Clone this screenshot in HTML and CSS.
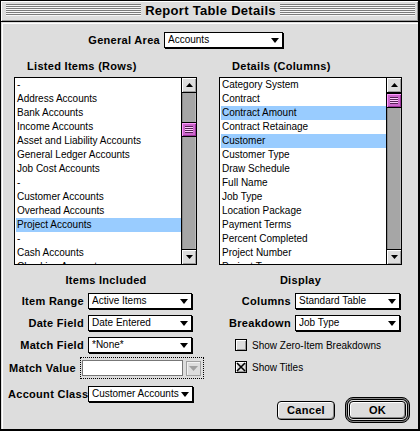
FILE: index.html
```html
<!DOCTYPE html>
<html>
<head>
<meta charset="utf-8">
<title>Report Table Details</title>
<link rel="stylesheet" href="styles.css">
</head>
<body>
<div class="window">
  <div class="titlebar">
    <div class="stripes"></div>
    <div class="title">Report Table Details</div>
    <div class="stripes"></div>
  </div>
  <div class="content">
    <div class="general-row">
      <span class="label general-label">General Area</span>
      <div class="popup popup-general"><span class="popup-text">Accounts</span><span class="caret"></span></div>
    </div>

    <div class="lists">
      <section class="list-col">
        <h2 class="col-head">Listed Items (Rows)</h2>
        <div class="listbox">
          <ul class="items">
            <li>-</li>
            <li>Address Accounts</li>
            <li>Bank Accounts</li>
            <li>Income Accounts</li>
            <li>Asset and Liability Accounts</li>
            <li>General Ledger Accounts</li>
            <li>Job Cost Accounts</li>
            <li>-</li>
            <li>Customer Accounts</li>
            <li>Overhead Accounts</li>
            <li class="sel">Project Accounts</li>
            <li>-</li>
            <li>Cash Accounts</li>
            <li>Checking Accounts</li>
          </ul>
          <div class="scrollbar">
            <div class="arrow arrow-up"><svg width="7" height="4" viewBox="0 0 7 4"><polygon points="0,4 7,4 3.5,0" fill="#000"/></svg></div>
            <div class="track"><div class="thumb thumb-left"><span class="grip"></span></div></div>
            <div class="arrow arrow-down"><svg width="7" height="4" viewBox="0 0 7 4"><polygon points="0,0 7,0 3.5,4" fill="#000"/></svg></div>
          </div>
        </div>
      </section>

      <section class="list-col">
        <h2 class="col-head">Details (Columns)</h2>
        <div class="listbox">
          <ul class="items">
            <li>Category System</li>
            <li>Contract</li>
            <li class="sel">Contract Amount</li>
            <li>Contract Retainage</li>
            <li class="sel">Customer</li>
            <li>Customer Type</li>
            <li>Draw Schedule</li>
            <li>Full Name</li>
            <li>Job Type</li>
            <li>Location Package</li>
            <li>Payment Terms</li>
            <li>Percent Completed</li>
            <li>Project Number</li>
            <li>Project Type</li>
          </ul>
          <div class="scrollbar">
            <div class="arrow arrow-up"><svg width="7" height="4" viewBox="0 0 7 4"><polygon points="0,4 7,4 3.5,0" fill="#000"/></svg></div>
            <div class="track"><div class="thumb"><span class="grip"></span></div></div>
            <div class="arrow arrow-down"><svg width="7" height="4" viewBox="0 0 7 4"><polygon points="0,0 7,0 3.5,4" fill="#000"/></svg></div>
          </div>
        </div>
      </section>
    </div>

    <div class="options">
      <section class="opt-left">
        <h2 class="opt-head">Items Included</h2>
        <div class="row first">
          <span class="label row-label">Item Range</span>
          <div class="popup popup-left"><span class="popup-text">Active Items</span><span class="caret"></span></div>
        </div>
        <div class="row">
          <span class="label row-label">Date Field</span>
          <div class="popup popup-left"><span class="popup-text">Date Entered</span><span class="caret"></span></div>
        </div>
        <div class="row">
          <span class="label row-label">Match Field</span>
          <div class="popup popup-left"><span class="popup-text">*None*</span><span class="caret"></span></div>
        </div>
        <div class="row row-match">
          <span class="label row-label">Match Value</span>
          <div class="dotted-frame">
            <div class="field"></div>
            <div class="disabled-btn"><svg width="9" height="5" viewBox="0 0 9 5"><polygon points="0,0 9,0 4.5,5" fill="#a0a0a0"/></svg></div>
          </div>
        </div>
        <div class="row row-class">
          <span class="label row-label">Account Class</span>
          <div class="popup popup-class"><span class="popup-text">Customer Accounts</span><span class="caret"></span></div>
        </div>
      </section>

      <section class="opt-right">
        <h2 class="opt-head display-head">Display</h2>
        <div class="row first">
          <span class="label row-label">Columns</span>
          <div class="popup popup-right"><span class="popup-text">Standard Table</span><span class="caret"></span></div>
        </div>
        <div class="row">
          <span class="label row-label">Breakdown</span>
          <div class="popup popup-right"><span class="popup-text">Job Type</span><span class="caret"></span></div>
        </div>
        <div class="check-row check-first">
          <span class="checkbox"></span>
          <span class="check-text">Show Zero-Item Breakdowns</span>
        </div>
        <div class="check-row check-second">
          <span class="checkbox"><svg width="10" height="10" viewBox="0 0 10 10"><path d="M1 1L9 9M9 1L1 9" stroke="#000" stroke-width="1.6"/></svg></span>
          <span class="check-text">Show Titles</span>
        </div>
        <div class="buttons">
          <div class="btn btn-cancel">Cancel</div>
          <div class="ok-ring"><div class="btn btn-ok">OK</div></div>
        </div>
      </section>
    </div>
  </div>
</div>
</body>
</html>
```

FILE: styles.css
```css
* { box-sizing: border-box; }

html, body {
  margin: 0;
  padding: 0;
}

body {
  width: 420px;
  height: 431px;
  background: #ffffff;
  color: #000;
  font-family: "Liberation Sans", Arial, sans-serif;
}

.window {
  width: 420px;
  height: 431px;
  background: #dddddd;
  border: 1px solid #000;
  border-right-width: 2px;
  border-bottom-width: 2px;
  display: flex;
  flex-direction: column;
}

/* ---------- title bar ---------- */
.titlebar {
  height: 21px;
  flex: none;
  border-bottom: 1px solid #000;
  display: flex;
  align-items: flex-start;
  padding: 0 3px 0 5px;
  background: #dddddd;
  box-shadow: inset 1px 1px #ffffff, inset -1px -1px #9a9a9a;
}

.stripes {
  flex: 1;
  height: 12px;
  margin-top: 3px;
  background: repeating-linear-gradient(to bottom, #7b7b7b 0 1px, #f7f7f7 1px 2px);
}

.title {
  padding: 0 4px;
  font-weight: bold;
  font-size: 13px;
  letter-spacing: 0.3px;
  line-height: 19px;
  white-space: nowrap;
}

/* ---------- content ---------- */
.content {
  flex: 1;
  padding: 0 16px 0 7px;
  display: flex;
  flex-direction: column;
  box-shadow: inset 1px 1px #dddddd, inset 2px 2px #ffffff;
}

.label {
  font-weight: bold;
  font-size: 11px;
  letter-spacing: 0.3px;
  white-space: nowrap;
}

.general-row {
  display: flex;
  align-items: center;
  height: 16px;
  margin-top: 10px;
}

.general-label {
  width: 152px;
  text-align: right;
  margin-right: 4px;
}

/* ---------- popup menus ---------- */
.popup {
  display: flex;
  align-items: center;
  height: 16px;
  border: 1px solid #000;
  background: #ffffff;
  box-shadow: 1px 1px 0 #000;
  padding: 0 3px 0 3px;
  font-size: 10px;
  line-height: 14px;
}

.popup-text {
  flex: 1;
  white-space: nowrap;
  overflow: hidden;
}

.caret {
  width: 0;
  height: 0;
  border-left: 4.5px solid transparent;
  border-right: 4.5px solid transparent;
  border-top: 5px solid #000;
}

.popup-general { width: 119px; }
.popup-left { width: 104px; }
.popup-class { width: 105px; }
.popup-right { width: 105px; }

/* ---------- lists ---------- */
.lists {
  display: flex;
  gap: 22px;
  padding-left: 6px;
  margin-top: 11px;
}

.list-col {
  width: 183px;
}

.col-head {
  margin: 0 0 4px 13px;
  font-weight: bold;
  font-size: 11px;
  letter-spacing: 0.3px;
  line-height: 14px;
  white-space: nowrap;
}

.listbox {
  height: 188px;
  border: 1px solid #000;
  background: #ffffff;
  display: flex;
  overflow: hidden;
}

.items {
  flex: 1;
  list-style: none;
  margin: 0;
  padding: 0 0 0 1px;
  overflow: hidden;
  font-size: 10px;
}

.items li {
  height: 14px;
  line-height: 14px;
  padding-left: 1px;
  white-space: nowrap;
}

.items li.sel {
  background: #99ccff;
}

.scrollbar {
  width: 15px;
  border-left: 1px solid #000;
  display: flex;
  flex-direction: column;
  background: #a6a6a6;
}

.arrow {
  height: 15px;
  flex: none;
  background: #dddddd;
  display: flex;
  align-items: center;
  justify-content: center;
  box-shadow: inset 1px 1px #ffffff, inset -1px -1px #a0a0a0;
}

.arrow svg { display: block; }

.arrow-up { border-bottom: 1px solid #000; }
.arrow-down { border-top: 1px solid #000; }

.track {
  flex: 1;
  box-shadow: inset 1px 0 #888888, inset -1px 0 #bbbbbb;
}

.thumb {
  height: 15px;
  border-top: 1px solid #000;
  border-bottom: 1px solid #000;
  background: #cc66cc;
  display: flex;
  align-items: center;
  justify-content: center;
  box-shadow: inset 1px 1px #ff99ff, inset -1px -1px #993399;
}

.thumb-left { margin-top: 29px; }

.grip {
  width: 8px;
  height: 7px;
  background: repeating-linear-gradient(to bottom, #552255 0 1px, #ffccff 1px 2px);
}

/* ---------- options ---------- */
.options {
  display: flex;
  margin-top: 8px;
}

.opt-left {
  width: 196px;
  display: flex;
  flex-direction: column;
}

.opt-right {
  flex: 1;
  display: flex;
  flex-direction: column;
}

.opt-head {
  margin: 0;
  text-align: center;
  font-weight: bold;
  font-size: 11px;
  letter-spacing: 0.3px;
  line-height: 14px;
}

.display-head { padding-right: 5px; }

.row {
  display: flex;
  align-items: center;
  height: 16px;
  margin-top: 6px;
}

.row-label {
  width: 76px;
  text-align: right;
  margin-right: 4px;
}

.opt-right .row-label { width: 87px; }

.row-match {
  height: 22px;
  margin-top: 4px;
}

.row-class { margin-top: 7px; }

.dotted-frame {
  display: flex;
  align-items: center;
  gap: 3px;
  border: 1px dotted #000;
  padding: 2px 2px 2px 1px;
}

.field {
  width: 101px;
  height: 16px;
  border: 1px solid #777777;
  background: #ffffff;
}

.disabled-btn {
  width: 15px;
  height: 15px;
  border: 1px solid #a0a0a0;
  background: #dddddd;
  display: flex;
  align-items: center;
  justify-content: center;
  box-shadow: inset 1px 1px #f2f2f2;
}

.disabled-btn svg { display: block; }

.check-row {
  display: flex;
  align-items: center;
  height: 14px;
  margin-left: 31px;
  font-size: 10px;
}

.check-first { margin-top: 7px; }
.check-second { margin-top: 8px; }

.checkbox {
  width: 12px;
  height: 12px;
  border: 1px solid #000;
  background: #dddddd;
  box-shadow: inset 1px 1px #ffffff, inset -1px -1px #999999;
  margin-right: 5px;
  display: flex;
  align-items: center;
  justify-content: center;
}

.checkbox svg { display: block; }

.check-text { white-space: nowrap; }

/* ---------- buttons ---------- */
.buttons {
  display: flex;
  justify-content: flex-end;
  align-items: center;
  gap: 10px;
  margin-top: 23px;
  margin-right: -8px;
}

.btn {
  display: flex;
  align-items: center;
  justify-content: center;
  border: 1px solid #000;
  border-radius: 4px;
  background: #dddddd;
  box-shadow: inset 1px 1px #ffffff, inset -1px -1px #888888;
  font-weight: bold;
  font-size: 11px;
  letter-spacing: 0.3px;
}

.btn-cancel {
  width: 58px;
  height: 19px;
}

.ok-ring {
  width: 65px;
  height: 26px;
  border: 1px solid #000;
  border-radius: 8px;
  padding: 3px;
  background: #dddddd;
  box-shadow: inset 0 0 0 1px #8a8a8a, inset 0 0 0 2px #000;
}

.btn-ok {
  width: 100%;
  height: 100%;
}
```
